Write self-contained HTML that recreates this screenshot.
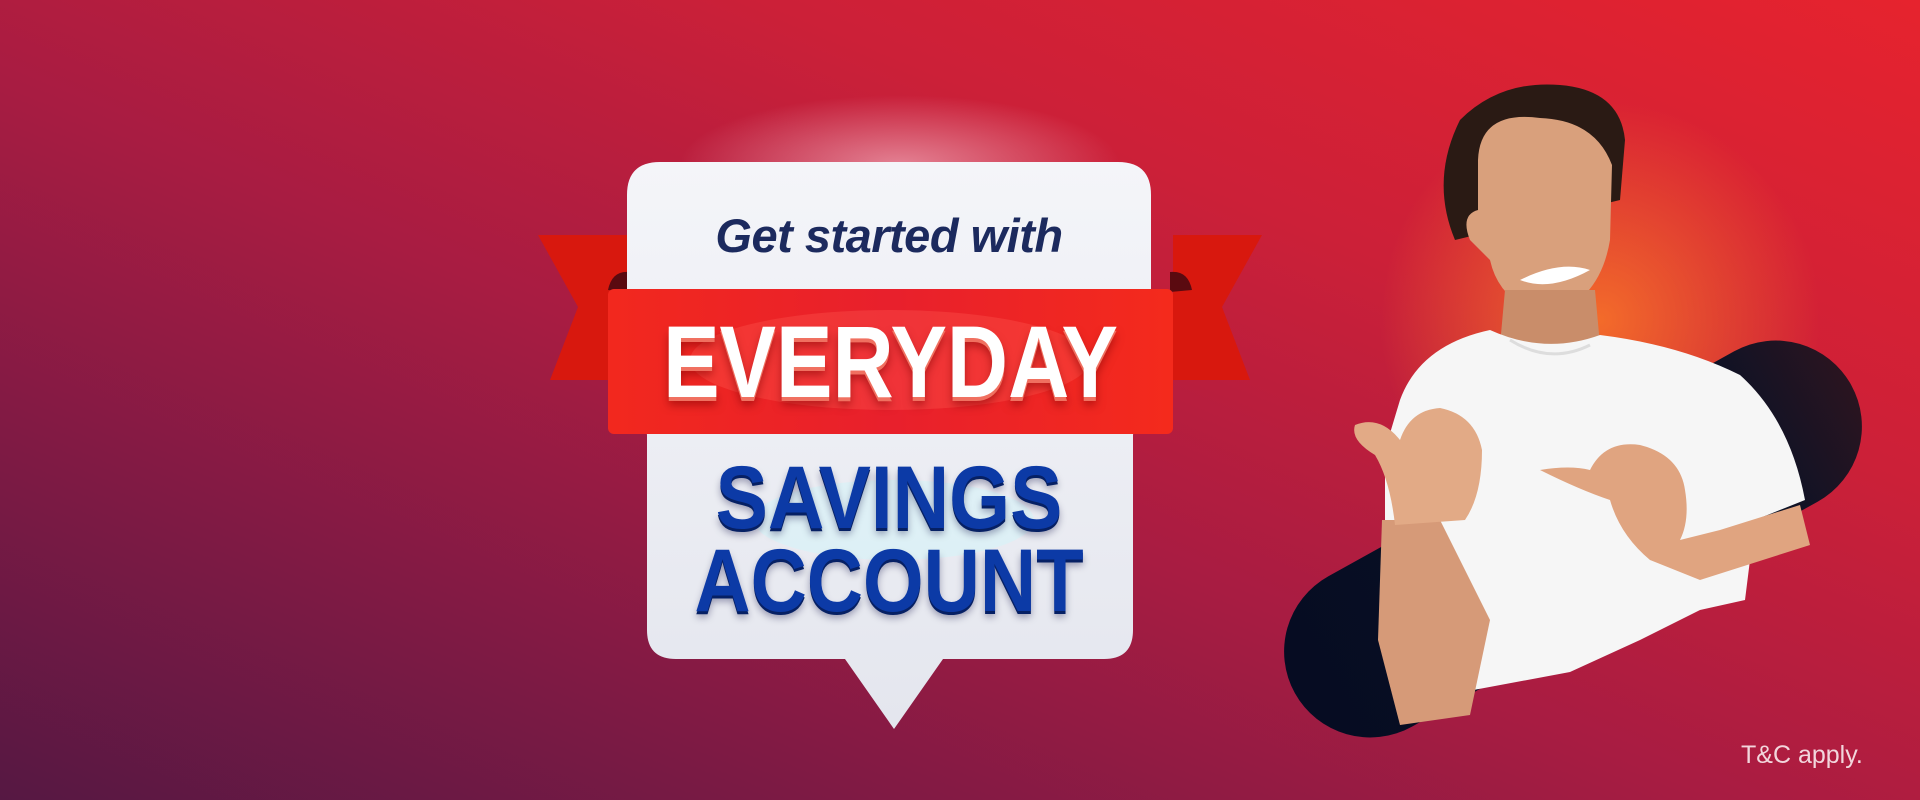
<!DOCTYPE html>
<html><head><meta charset="utf-8"><style>
html,body{margin:0;padding:0;width:1920px;height:800px;overflow:hidden}
body{position:relative;font-family:"Liberation Sans",sans-serif;
background:
radial-gradient(ellipse 220px 70px at 900px 165px,rgba(255,210,220,.55),rgba(255,200,210,0) 100%),
radial-gradient(ellipse 220px 220px at 1600px 320px,rgba(250,120,40,.85),rgba(250,110,40,0) 100%),
linear-gradient(to bottom left,#e6232e 0%,#cc2038 30%,#a81c42 55%,#7e1a44 78%,#561843 100%);}
.abs{position:absolute}
</style></head><body>
<svg class="abs" style="left:0;top:0" width="1920" height="800">
<defs>
<linearGradient id="card" x1="0" y1="0" x2="0" y2="1"><stop offset="0" stop-color="#f4f5f9"/><stop offset="1" stop-color="#e4e6ee"/></linearGradient>
<linearGradient id="rib" x1="0" y1="0" x2="1" y2="0"><stop offset="0" stop-color="#f2281e"/><stop offset=".5" stop-color="#e8202c"/><stop offset="1" stop-color="#f42a1c"/></linearGradient>
<linearGradient id="pill" x1="0" y1="0" x2="1" y2="0"><stop offset="0" stop-color="#060c22"/><stop offset=".8" stop-color="#0b1226"/><stop offset="1" stop-color="#2a1420"/></linearGradient>
</defs>
<polygon points="538,235 627,235 627,380 550,380 578,307" fill="#d8180e"/>
<polygon points="1262,235 1173,235 1173,380 1250,380 1222,307" fill="#d8180e"/>
<path d="M608,290 Q612,270 630,272 L630,292Z" fill="#5a0a10"/>
<path d="M1192,290 Q1188,270 1170,272 L1170,292Z" fill="#5a0a10"/>
<path d="M627,195 Q627,162 660,162 L1118,162 Q1151,162 1151,195 L1151,300 L1133,435 L1133,630 Q1133,659 1104,659 L943,659 L894,729 L845,659 L676,659 Q647,659 647,630 L647,435 L627,300Z" fill="url(#card)"/>
<ellipse cx="894" cy="520" rx="140" ry="40" fill="#d6f4f8" opacity=".6"/>
<rect x="608" y="289" width="565" height="145" rx="6" fill="url(#rib)"/>
<ellipse cx="890" cy="360" rx="200" ry="50" fill="#ff5a50" opacity=".35"/>
<g transform="translate(1573,539) rotate(-29)"><rect x="-318" y="-86" width="636" height="172" rx="86" fill="url(#pill)"/></g>
<g>
<path d="M1455,240 Q1430,180 1460,120 Q1500,80 1560,85 Q1620,90 1625,140 L1620,200 Z" fill="#2a1a14"/>
<path d="M1478,160 Q1480,110 1540,118 Q1595,120 1612,165 L1610,240 Q1600,300 1550,315 Q1500,305 1490,260 L1470,240 Q1460,215 1478,210Z" fill="#d9a07c"/>
<path d="M1520,280 Q1550,292 1590,270 Q1560,260 1520,280Z" fill="#fff"/>
<path d="M1505,290 L1595,290 L1600,345 L1500,345Z" fill="#c98d6a"/>
<path d="M1400,400 Q1420,345 1490,330 Q1545,355 1600,335 Q1680,345 1740,375 Q1790,420 1805,500 L1755,520 L1745,600 L1700,610 L1640,640 L1570,672 L1420,700 L1385,580 L1385,450Z" fill="#f6f6f6"/>
<path d="M1510,340 Q1550,365 1590,345" stroke="#ddd" stroke-width="3" fill="none"/>
<path d="M1382,520 L1440,520 L1490,620 L1470,715 L1400,725 L1378,640Z" fill="#d69a78"/>
<path d="M1355,425 Q1380,415 1400,440 Q1410,410 1440,408 Q1475,415 1482,450 Q1482,495 1465,520 L1395,525 Q1390,480 1375,455 Q1350,440 1355,425Z" fill="#e2aa86"/>
<path d="M1540,470 Q1570,465 1590,470 Q1605,440 1640,445 Q1680,455 1685,490 Q1690,520 1680,540 L1720,530 L1800,505 L1810,545 L1700,580 L1650,560 Q1620,535 1610,500 Q1580,490 1540,470Z" fill="#e0a480"/>
</g>
</svg>
<div class="abs" style="left:627px;top:208px;width:524px;text-align:center;font-size:47px;font-style:italic;font-weight:bold;color:#1c2a5e;letter-spacing:-0.5px;transform:scaleX(1.0)">Get started with</div>
<div class="abs" style="left:608px;top:311px;width:565px;text-align:center;font-size:102px;font-weight:bold;color:#fff;line-height:102px;transform:scaleX(.83);text-shadow:0 4px 0 #f07060,0 8px 10px rgba(120,0,0,.5)">EVERYDAY</div>
<div class="abs" style="left:627px;top:453px;width:524px;text-align:center;font-size:89px;font-weight:bold;color:#0c3aa6;line-height:89px;transform:scaleX(.88);text-shadow:0 3px 0 #062064,0 6px 8px rgba(0,0,60,.35)">SAVINGS</div>
<div class="abs" style="left:627px;top:536px;width:524px;text-align:center;font-size:89px;font-weight:bold;color:#0c3aa6;line-height:89px;transform:scaleX(.875);text-shadow:0 3px 0 #062064,0 6px 8px rgba(0,0,60,.35)">ACCOUNT</div>
<div class="abs" style="left:1741px;top:741px;font-size:25px;color:#f2d6dc;letter-spacing:0px">T&amp;C apply.</div>
</body></html>
